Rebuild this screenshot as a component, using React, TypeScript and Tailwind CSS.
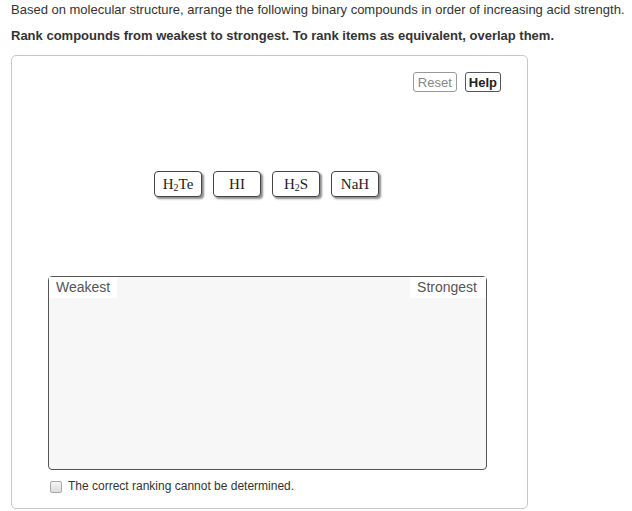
import React from "react";

const Chip = ({ children }: { children: React.ReactNode }) => (
  <div className="w-[48px] h-[26px] flex items-center justify-center rounded-[4px] border border-[#444] bg-white text-[15px] text-[#222] shadow-[2px_2px_2px_rgba(0,0,0,0.45)] font-['Liberation_Serif',serif]">
    {children}
  </div>
);

const Sub = ({ children }: { children: React.ReactNode }) => (
  <span className="inline-block text-[10px] leading-none translate-y-[4px]">{children}</span>
);

export default function App() {
  return (
    <div className="w-[632px] h-[511px] bg-white font-['Liberation_Sans',Arial,sans-serif] text-[#333] relative overflow-hidden">
      <div className="pl-[11px] pt-[2px] text-[13px] leading-[16px] whitespace-nowrap">
        Based on molecular structure, arrange the following binary compounds in order of increasing acid strength.
      </div>
      <div className="pl-[11px] pt-[10px] text-[13px] leading-[16px] font-bold whitespace-nowrap">
        Rank compounds from weakest to strongest. To rank items as equivalent, overlap them.
      </div>
      <div className="ml-[11px] mt-[11px] w-[517px] h-[454px] border border-[#c8c8c8] rounded-[5px] flex flex-col">
        <div className="flex justify-end gap-[8px] pr-[26px] pt-[16px]">
          <button className="h-[20px] px-[4px] border border-[#999] rounded-[3px] text-[13px] leading-none text-[#888] bg-white">
            Reset
          </button>
          <button className="h-[20px] px-[3px] border border-[#555] rounded-[3px] text-[13px] leading-none font-bold text-[#222] bg-white">
            Help
          </button>
        </div>
        <div className="flex gap-[11px] pl-[142px] pt-[79px]">
          <Chip>
            H<Sub>2</Sub>Te
          </Chip>
          <Chip>HI</Chip>
          <Chip>
            H<Sub>2</Sub>S
          </Chip>
          <Chip>NaH</Chip>
        </div>
        <div className="ml-[36px] mt-[79px] w-[439px] h-[194px] border border-[#555] rounded-[4px] bg-[#f7f7f7] flex justify-between items-start">
          <div className="bg-white h-[21px] px-[7px] text-[14px] leading-[19px] text-[#555] pt-[1px]">Weakest</div>
          <div className="bg-white h-[21px] pl-[7px] pr-[9px] text-[14px] leading-[19px] text-[#555] pt-[1px]">Strongest</div>
        </div>
        <div className="flex items-center ml-[38px] mt-[9px] gap-[6px]">
          <div className="w-[12px] h-[12px] rounded-[2px] border border-[#aaa] bg-gradient-to-b from-[#f4f4f4] to-[#dcdcdc]" />
          <span className="text-[12px] leading-[15px] text-[#333]">The correct ranking cannot be determined.</span>
        </div>
      </div>
    </div>
  );
}
